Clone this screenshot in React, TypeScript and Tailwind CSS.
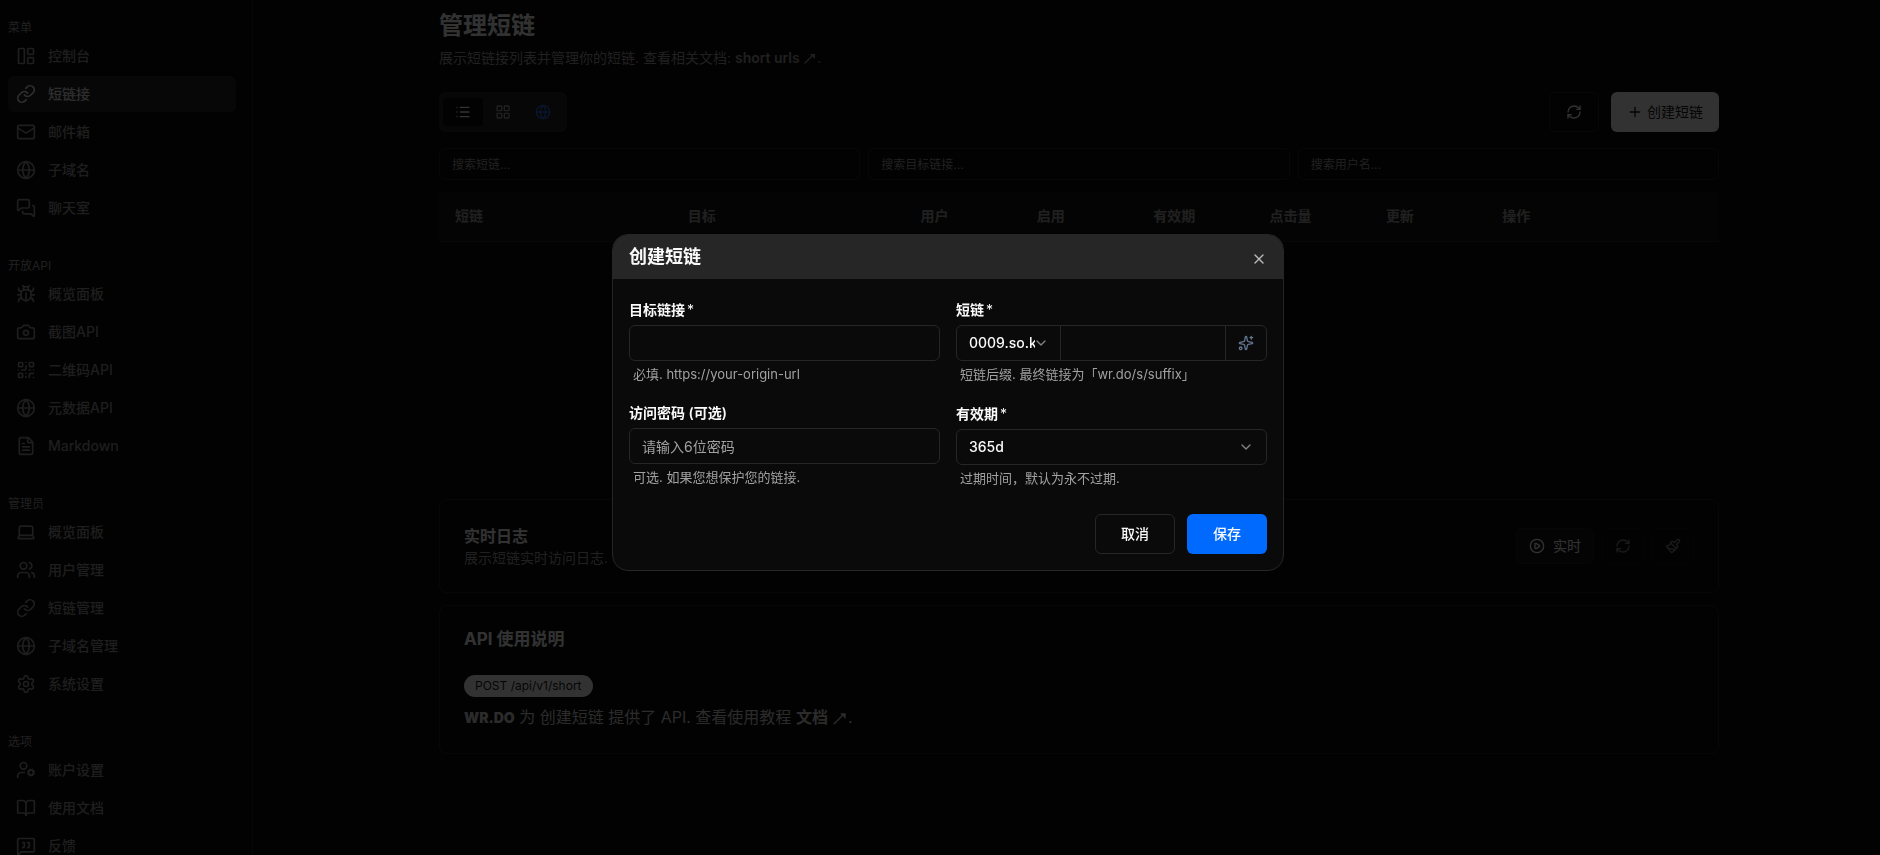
import { type ReactNode, useState } from "react";
import {
  BookOpen,
  Bug,
  Camera,
  ChevronDown,
  CirclePlay,
  FileText,
  Globe,
  Laptop,
  LayoutGrid,
  LayoutPanelLeft,
  Link as LinkIcon,
  List,
  LucideIcon,
  Mail,
  MessageSquareQuote,
  MessagesSquare,
  Paintbrush,
  Plus,
  QrCode,
  RefreshCw,
  Settings,
  Sparkles,
  UserCog,
  Users,
  X,
} from "lucide-react";

interface NavItem {
  icon: LucideIcon;
  label: string;
  active?: boolean;
}

const sections: { title: string; items: NavItem[] }[] = [
  {
    title: "菜单",
    items: [
      { icon: LayoutPanelLeft, label: "控制台" },
      { icon: LinkIcon, label: "短链接", active: true },
      { icon: Mail, label: "邮件箱" },
      { icon: Globe, label: "子域名" },
      { icon: MessagesSquare, label: "聊天室" },
    ],
  },
  {
    title: "开放API",
    items: [
      { icon: Bug, label: "概览面板" },
      { icon: Camera, label: "截图API" },
      { icon: QrCode, label: "二维码API" },
      { icon: Globe, label: "元数据API" },
      { icon: FileText, label: "Markdown" },
    ],
  },
  {
    title: "管理员",
    items: [
      { icon: Laptop, label: "概览面板" },
      { icon: Users, label: "用户管理" },
      { icon: LinkIcon, label: "短链管理" },
      { icon: Globe, label: "子域名管理" },
      { icon: Settings, label: "系统设置" },
    ],
  },
  {
    title: "选项",
    items: [
      { icon: UserCog, label: "账户设置" },
      { icon: BookOpen, label: "使用文档" },
      { icon: MessageSquareQuote, label: "反馈" },
    ],
  },
];

const columns = [
  { label: "短链", width: "w-2/11" },
  { label: "目标", width: "w-2/11" },
  { label: "用户", width: "w-1/11" },
  { label: "启用", width: "w-1/11" },
  { label: "有效期", width: "w-1/11" },
  { label: "点击量", width: "w-1/11" },
  { label: "更新", width: "w-1/11" },
  { label: "操作", width: "w-2/11" },
];

const searches = ["搜索短链...", "搜索目标链接...", "搜索用户名..."];

function Sidebar() {
  return (
    <aside className="w-[253px] shrink-0 overflow-hidden border-r border-neutral-800 pl-2 pr-4 pt-5">
      <nav className="flex flex-col gap-8">
        {sections.map((section) => (
          <section key={section.title} className="flex flex-col gap-0.5">
            <p className="text-xs text-neutral-400">{section.title}</p>
            {section.items.map(({ icon: Icon, label, active }) => (
              <a
                key={label}
                href="#"
                className={
                  active
                    ? "flex h-9 shrink-0 items-center gap-3 rounded-md bg-neutral-800 px-2 text-sm font-medium text-neutral-200"
                    : "flex h-9 shrink-0 items-center gap-3 rounded-md px-2 text-sm font-medium text-[#949494]"
                }
              >
                <Icon size={20} />
                {label}
              </a>
            ))}
          </section>
        ))}
      </nav>
    </aside>
  );
}

function NorthEastArrow({ className }: { className: string }) {
  return (
    <svg viewBox="0 0 14 14" className={className} fill="none" stroke="currentColor" strokeWidth={1.25}>
      <path d="M1.500 11.500 10 3" />
      <path d="M7 2H12V7Z" fill="currentColor" stroke="none" />
    </svg>
  );
}

function Toolbar() {
  return (
    <div className="flex items-center justify-between">
      <div className="flex h-10 items-center rounded-md bg-neutral-800 p-1">
        <button aria-label="列表" className="flex h-7 w-10 items-center justify-center rounded bg-neutral-950 text-neutral-50">
          <List size={16} />
        </button>
        <button aria-label="网格" className="flex h-7 w-10 items-center justify-center text-neutral-400">
          <LayoutGrid size={16} />
        </button>
        <button aria-label="地图" className="flex h-7 w-10 items-center justify-center text-[#2a6ad8]">
          <Globe size={16} />
        </button>
      </div>
      <div className="flex gap-3">
        <button aria-label="刷新" className="flex h-10 w-[50px] items-center justify-center rounded-md border border-neutral-800">
          <RefreshCw size={16} />
        </button>
        <button className="flex h-10 items-center gap-1 rounded-md bg-neutral-50 px-4 text-sm text-neutral-900">
          <Plus size={16} />
          创建短链
        </button>
      </div>
    </div>
  );
}

function LiveLogCard() {
  return (
    <section className="mt-3 flex items-center justify-between rounded-lg border border-neutral-800 p-6">
      <div>
        <h2 className="text-base font-semibold">实时日志</h2>
        <p className="text-sm text-neutral-400">展示短链实时访问日志.</p>
      </div>
      <div className="flex gap-2">
        <button className="flex h-9 items-center gap-2 rounded-md border border-[#202020] bg-[#171717] px-3 text-sm">
          <CirclePlay size={16} />
          实时
        </button>
        <button aria-label="刷新日志" disabled className="flex h-9 w-[42px] items-center justify-center rounded-md border border-neutral-800 opacity-50">
          <RefreshCw size={16} />
        </button>
        <button aria-label="清空日志" disabled className="flex h-9 w-[42px] items-center justify-center rounded-md border border-neutral-800 opacity-50">
          <Paintbrush size={16} />
        </button>
      </div>
    </section>
  );
}

function ApiCard() {
  return (
    <section className="mt-3 flex flex-col items-start rounded-lg border border-neutral-800 p-6">
      <h2 className="text-[17px] leading-[18px] font-bold">API 使用说明</h2>
      <span className="mt-[27px] flex h-[22px] items-center rounded-full bg-neutral-50 px-[11px] text-xs text-neutral-900">
        POST /api/v1/short
      </span>
      <p className="mt-2 text-base text-neutral-300">
        <span className="text-sm font-black">WR.DO</span> 为 创建短链 提供了 API. 查看使用教程{" "}
        <a href="#" className="font-semibold">
          文档 <NorthEastArrow className="inline size-4" />
        </a>
        .
      </p>
    </section>
  );
}

interface FieldProps {
  id: string;
  label: string;
  required?: boolean;
  hint: string;
  children: ReactNode;
}

function Field({ id, label, required, hint, children }: FieldProps) {
  return (
    <div className="flex flex-col">
      <label htmlFor={id} className="mb-2 text-sm leading-none font-semibold">
        {label}
        {required && <span className="ml-0.5 font-normal">*</span>}
      </label>
      {children}
      <p className="mt-1 px-1 text-[13px] leading-[18px] text-neutral-400">{hint}</p>
    </div>
  );
}

function CreateDialog({ onClose }: { onClose: () => void }) {
  return (
    <div className="fixed inset-0 flex items-center justify-center bg-black/80 pb-[50px] pl-4">
      <div
        role="dialog"
        aria-labelledby="dialog-title"
        className="w-full max-w-2xl overflow-hidden rounded-2xl border border-neutral-800 bg-neutral-950"
      >
        <header className="flex h-11 items-center justify-between bg-neutral-800 px-4">
          <h2 id="dialog-title" className="text-lg font-bold">
            创建短链
          </h2>
          <button aria-label="关闭" onClick={onClose} className="mt-1 opacity-70">
            <X size={16} />
          </button>
        </header>
        <form className="px-4 pt-6 pb-4" onSubmit={(e) => e.preventDefault()}>
          <div className="grid grid-cols-2 gap-4">
            <div className="flex flex-col gap-[23px]">
              <Field id="target" label="目标链接" required hint="必填. https://your-origin-url">
                <input id="target" className="h-9 rounded-md border border-neutral-800 px-3 text-sm" />
              </Field>
              <Field id="password" label="访问密码 (可选)" hint="可选. 如果您想保护您的链接.">
                <input
                  id="password"
                  placeholder="请输入6位密码"
                  className="h-9 rounded-md border border-neutral-800 px-3 text-sm placeholder:text-neutral-400"
                />
              </Field>
            </div>
            <div className="flex flex-col gap-6">
              <Field id="suffix" label="短链" required hint="短链后缀. 最终链接为「wr.do/s/suffix」">
                <div className="flex h-9 rounded-md border border-neutral-800">
                  <div className="relative w-[104px] border-r border-neutral-800">
                    <select aria-label="域名" className="h-full w-full appearance-none pr-[25px] pl-3 text-sm font-medium">
                      <option>0009.so.kg</option>
                    </select>
                    <ChevronDown size={16} className="pointer-events-none absolute top-1/2 right-[11px] -translate-y-1/2 opacity-50" />
                  </div>
                  <input id="suffix" aria-label="短链后缀" className="min-w-0 flex-1 px-3 text-sm" />
                  <button
                    type="button"
                    aria-label="随机生成"
                    className="flex w-[41px] items-center justify-center border-l border-neutral-800 text-slate-500"
                  >
                    <Sparkles size={16} />
                  </button>
                </div>
              </Field>
              <Field id="expiration" label="有效期" required hint="过期时间，默认为永不过期.">
                <div className="relative h-9 rounded-md border border-neutral-800">
                  <select id="expiration" className="h-full w-full appearance-none px-3 text-sm font-medium">
                    <option>365d</option>
                  </select>
                  <ChevronDown size={16} className="pointer-events-none absolute top-1/2 right-3 -translate-y-1/2 opacity-50" />
                </div>
              </Field>
            </div>
          </div>
          <div className="mt-[27px] flex justify-end gap-3">
            <button type="button" onClick={onClose} className="h-10 w-20 rounded-md border border-neutral-800 text-sm font-medium">
              取消
            </button>
            <button type="submit" className="h-10 w-20 rounded-md bg-[#006aff] text-sm font-medium">
              保存
            </button>
          </div>
        </form>
      </div>
    </div>
  );
}

export default function App() {
  const [open, setOpen] = useState(true);

  return (
    <div className="flex h-screen overflow-hidden bg-neutral-950 font-[Inter,'Noto_Sans_CJK_SC',sans-serif] text-neutral-50">
      <Sidebar />
      <main className="min-w-0 flex-1 overflow-hidden pl-[25px]">
        <div className="mx-auto w-full max-w-7xl pt-2">
          <h1 className="text-2xl leading-9 font-bold">管理短链</h1>
          <p className="mt-1 text-sm text-neutral-400">
            展示短链接列表并管理你的短链. 查看相关文档:{" "}
            <a href="#" className="font-semibold">
              short urls <NorthEastArrow className="inline size-3.5" />
            </a>
            .
          </p>
          <div className="mt-6">
            <Toolbar />
          </div>
          <div className="mt-4 grid grid-cols-3 gap-2">
            {searches.map((text) => (
              <input
                key={text}
                aria-label={text}
                placeholder={text}
                className="h-8 rounded-md border border-neutral-800 px-3 text-xs placeholder:text-neutral-400"
              />
            ))}
          </div>
          <div className="mt-3 min-h-[295px]">
            <table className="w-full table-fixed">
              <thead>
                <tr className="h-[49px] border-b border-neutral-800 bg-[#181818]">
                  {columns.map((column) => (
                    <th key={column.label} className={`${column.width} px-4 text-left text-sm font-semibold text-neutral-400`}>
                      {column.label}
                    </th>
                  ))}
                </tr>
              </thead>
            </table>
          </div>
          <LiveLogCard />
          <ApiCard />
        </div>
      </main>
      {open && <CreateDialog onClose={() => setOpen(false)} />}
    </div>
  );
}
